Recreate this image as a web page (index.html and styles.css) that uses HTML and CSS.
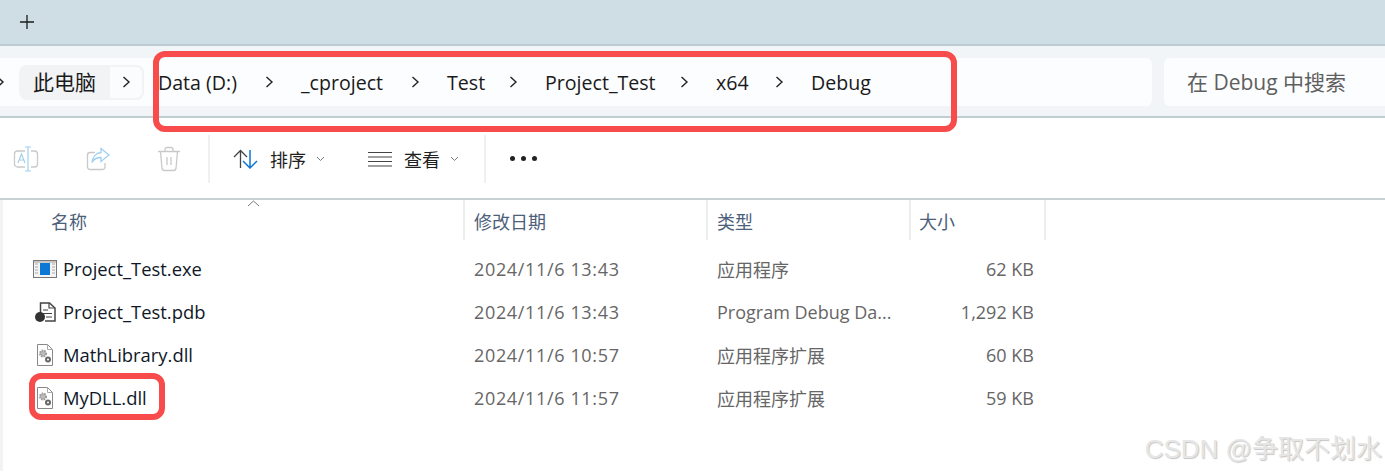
FILE: index.html
```html
<!DOCTYPE html>
<html lang="zh">
<head>
<meta charset="utf-8">
<title>Debug</title>
<link rel="stylesheet" href="styles.css">
</head>
<body>
<div class="window">
  <header class="tabbar">
    <svg class="plus" width="16" height="16" viewBox="0 0 16 16"><path d="M8 1v14M1 8h14" stroke="#1c1c1c" stroke-width="1.300" fill="none"/></svg>
  </header>
  <nav class="addressbar">
    <div class="crumbs">
      <svg class="chev chev-clip" width="9" height="14" viewBox="0 0 9 14"><path d="M1.500 2l5.500 5-5.500 5" /></svg>
      <div class="crumb-root"><span class="root-label">此电脑</span><span class="root-arrow"><svg class="chev" width="9" height="14" viewBox="0 0 9 14"><path d="M1.500 2l5.500 5-5.500 5" /></svg></span></div>
      <div class="path">
        <span class="seg seg-data">Data (D:)</span><svg class="chev" width="9" height="14" viewBox="0 0 9 14"><path d="M1.500 2l5.500 5-5.500 5" /></svg>
        <span class="seg seg-c">_cproject</span><svg class="chev" width="9" height="14" viewBox="0 0 9 14"><path d="M1.500 2l5.500 5-5.500 5" /></svg>
        <span class="seg seg-t">Test</span><svg class="chev" width="9" height="14" viewBox="0 0 9 14"><path d="M1.500 2l5.500 5-5.500 5" /></svg>
        <span class="seg seg-p">Project_Test</span><svg class="chev" width="9" height="14" viewBox="0 0 9 14"><path d="M1.500 2l5.500 5-5.500 5" /></svg>
        <span class="seg seg-x">x64</span><svg class="chev" width="9" height="14" viewBox="0 0 9 14"><path d="M1.500 2l5.500 5-5.500 5" /></svg>
        <span class="seg">Debug</span>
      </div>
    </div>
    <div class="search">在 Debug 中搜索</div>
  </nav>
  <section class="toolbar">
    <div class="tool-group disabled">
      <svg width="26" height="26" viewBox="0 0 26 26" fill="none"><rect x="1.500" y="5" width="23" height="16" rx="3" stroke="#c9c9c9" stroke-width="1.300"/><rect x="12" y="1" width="6" height="24" fill="#fff"/><path d="M12 1h6M15 1v24M12 25h6" stroke="#9fd0f0" stroke-width="1.200"/><path d="M5 17l3.500-9 3.500 9M6.300 14h4.400" stroke="#a9cfe8" stroke-width="1.200"/></svg>
      <svg width="26" height="26" viewBox="0 0 26 26" fill="none"><path d="M20 17v4a2.500 2.500 0 0 1-2.500 2.500H5A2.500 2.500 0 0 1 2.500 21V9A2.500 2.500 0 0 1 5 6.500h5" stroke="#c9c9c9" stroke-width="1.300"/><path d="M16 2.500l8 6.500-8 6.500V11.500c-4 0-7 1-9 5 .5-5.500 4-9.500 9-10z" stroke="#9fd0f0" stroke-width="1.300"/></svg>
      <svg width="24" height="26" viewBox="0 0 24 26" fill="none"><path d="M1 5.500h22M8 5.500V3.500a2 2 0 0 1 2-2h4a2 2 0 0 1 2 2v2M3.500 5.500l1.500 17a2.500 2.500 0 0 0 2.500 2h9a2.500 2.500 0 0 0 2.500-2l1.500-17M10 11v8M14 11v8" stroke="#c9c9c9" stroke-width="1.300"/></svg>
    </div>
    <div class="tool-sep"></div>
    <div class="tool-btn tool-sort">
      <svg width="25" height="20" viewBox="0 0 25 20" fill="none"><path d="M1 8l6.500-6.500L14 8M7.500 1.500V19" stroke="#444" stroke-width="1.300"/><path d="M10 12l7 7 7-7M17 1v18" stroke="#0a78d4" stroke-width="1.500"/></svg>
      <span class="tool-label">排序</span>
      <svg class="caret" width="9" height="6" viewBox="0 0 9 6"><path d="M1 1l3.500 3.500L8 1"/></svg>
    </div>
    <div class="tool-btn tool-view">
      <svg width="24" height="16" viewBox="0 0 24 16" fill="none"><path d="M0 1.500h24M0 6h24M0 10.500h24M0 15h24" stroke="#444" stroke-width="1.200"/></svg>
      <span class="tool-label">查看</span>
      <svg class="caret" width="9" height="6" viewBox="0 0 9 6"><path d="M1 1l3.500 3.500L8 1"/></svg>
    </div>
    <div class="tool-sep sep-2"></div>
    <div class="more"><i></i><i></i><i></i></div>
  </section>
  <main class="files">
    <div class="sort-mark"><svg width="13" height="7" viewBox="0 0 13 7"><path d="M1 6l5.500-5L12 6" fill="none" stroke="#7a7a7a"/></svg></div>
    <div class="row head">
      <div class="col-name">名称</div>
      <div class="col-date">修改日期</div>
      <div class="col-type">类型</div>
      <div class="col-size">大小</div>
    </div>
    <div class="row item">
      <div class="col-name">
        <svg class="ficon" width="24" height="18" viewBox="0 0 24 18" fill="none"><rect x=".5" y=".5" width="23" height="17" fill="#f4f4f4" stroke="#777"/><rect x="7" y="3" width="10" height="12" fill="#0a78d4"/><path d="M2 4h3M2 7h3M2 10h3M2 13h3M19 4h3M19 7h3M19 10h3M19 13h3" stroke="#aaa"/><path d="M1 2h22" stroke="#999"/></svg>
        <span>Project_Test.exe</span>
      </div>
      <div class="col-date">2024/11/6 13:43</div>
      <div class="col-type">应用程序</div>
      <div class="col-size">62 KB</div>
    </div>
    <div class="row item">
      <div class="col-name">
        <svg class="ficon" width="24" height="20" viewBox="0 0 24 20" fill="none"><path d="M7.500 12V1h9l5.500 5v13H12" fill="#fff" stroke="#444" stroke-width="1.500"/><path d="M16 1v5h6M10 8h5M10 11.500h9M13 15h6" stroke="#444" stroke-width="1.200"/><circle cx="7" cy="15" r="5" fill="#333"/></svg>
        <span>Project_Test.pdb</span>
      </div>
      <div class="col-date">2024/11/6 13:43</div>
      <div class="col-type">Program Debug Da...</div>
      <div class="col-size">1,292 KB</div>
    </div>
    <div class="row item">
      <div class="col-name">
        <svg class="ficon" width="24" height="22" viewBox="0 0 24 22" fill="none"><path d="M4.500.5h10l5 5v16h-15z" fill="#fff" stroke="#888"/><path d="M14.500.5v5h5" stroke="#aaa"/><circle cx="10" cy="9.500" r="3" fill="#bbb" stroke="#999" stroke-width="2" stroke-dasharray="1.500 1"/><circle cx="15" cy="15.500" r="2" fill="#fff" stroke="#666" stroke-width="2"/></svg>
        <span>MathLibrary.dll</span>
      </div>
      <div class="col-date">2024/11/6 10:57</div>
      <div class="col-type">应用程序扩展</div>
      <div class="col-size">60 KB</div>
    </div>
    <div class="row item">
      <div class="col-name">
        <svg class="ficon" width="24" height="22" viewBox="0 0 24 22" fill="none"><path d="M4.500.5h10l5 5v16h-15z" fill="#fff" stroke="#888"/><path d="M14.500.5v5h5" stroke="#aaa"/><circle cx="10" cy="9.500" r="3" fill="#bbb" stroke="#999" stroke-width="2" stroke-dasharray="1.500 1"/><circle cx="15" cy="15.500" r="2" fill="#fff" stroke="#666" stroke-width="2"/></svg>
        <span>MyDLL.dll</span>
      </div>
      <div class="col-date">2024/11/6 11:57</div>
      <div class="col-type">应用程序扩展</div>
      <div class="col-size">59 KB</div>
    </div>
  </main>
  <div class="mark mark-path"></div>
  <div class="mark mark-file"></div>
  <div class="watermark">CSDN @争取不划水</div>
</div>
</body>
</html>
```
FILE: styles.css
```css
* { box-sizing: border-box; }
html, body { margin: 0; padding: 0; background: #fff; overflow: hidden; }
body { font-family: "Open Sans", "Noto Sans CJK SC", sans-serif; color: #1a1a1a; }
.window { position: relative; width: 1385px; height: 473px; overflow: hidden; }

.tabbar { height: 46px; background: #cfdde4; border-bottom: 2px solid #bccbd1; padding: 14px 0 0 19px; }
.plus { display: block; }

.addressbar { height: 72px; background: #f1f5f7; border-bottom: 2px solid #c0cdd1; display: flex; gap: 12px; padding: 12px 0 0 0; }
.crumbs { width: 1152px; height: 48px; background: #fcfdfe; border-radius: 0 6px 6px 0; display: flex; align-items: center; padding-left: 19px; }
.chev-clip { margin-left: -23px; margin-right: 14px; }
.crumb-root { width: 125px; height: 35px; border-radius: 8px; background: #f2f3f5; display: flex; flex: none; }
.root-label { width: 91px; padding-left: 14px; font-size: 21px; line-height: 35px; white-space: nowrap; }
.root-arrow { width: 34px; background: #fbfcfd; border: 2px solid #f2f3f5; border-left: 0; border-radius: 0 8px 8px 0; display: flex; align-items: center; justify-content: center; }
.path { display: flex; align-items: center; margin-left: 14px; font-size: 19.600px; }
.seg { white-space: nowrap; flex: none; margin-right: 26px; }
.seg + .chev { margin-right: 27px; }
.seg-data { width: 81px; }
.seg-c { width: 84px; }
.seg-t { width: 36px; }
.seg-p { width: 109px; }
.seg-x { width: 33px; }
.chev { fill: none; stroke: #222; stroke-width: 1.400; flex: none; }
.search { flex: 1; height: 48px; background: #fcfdfe; border-radius: 6px 0 0 6px; padding-left: 23px; font-size: 21px; line-height: 48px; color: #5f5f5f; white-space: nowrap; }

.toolbar { height: 82px; border-bottom: 2px solid #c7d0d3; display: flex; align-items: center; padding: 1px 0 0 13px; }
.tool-group { width: 183px; display: flex; align-items: center; gap: 46px; }
.tool-sep { width: 2px; height: 48px; background: #eef0f1; margin-left: 12px; }
.tool-btn { display: flex; align-items: center; }
.tool-sort { margin-left: 23px; width: 135px; }
.tool-view { width: 118px; }
.tool-label { font-size: 18px; margin-left: 12px; margin-right: 10px; color: #1f1f1f; }
.caret { fill: none; stroke: #777; stroke-width: 1; }
.sep-2 { margin-left: -2px; }
.more { margin-left: 24px; display: flex; gap: 6px; }
.more i { width: 5px; height: 5px; border-radius: 50%; background: #222; display: block; }

.files { position: relative; height: 271px; border-left: 3px solid #f1f3f4; }
.sort-mark { position: absolute; left: 244px; top: 0; line-height: 0; }
.row { display: grid; grid-template-columns: 462px 243px 203px 135px; align-items: center; }
.head { height: 40px; font-size: 18px; color: #4c607a; }
.head > div { height: 40px; line-height: 44px; border-right: 2px solid #ecedef; }
.head .col-name { padding-left: 48px; }
.head .col-date { padding-left: 9px; }
.head .col-type { padding-left: 9px; }
.head .col-size { padding-left: 8px; }
.item { height: 43px; font-size: 18px; }
.item:nth-child(3) { margin-top: 7px; }
.item .col-name { display: flex; align-items: center; padding-left: 30px; font-size: 18.400px; color: #101828; }
.ficon { width: 24px; flex: none; margin-right: 6px; }
.item .col-date { padding-left: 9px; color: #666; letter-spacing: .65px; }
.item .col-type { padding-left: 9px; color: #666; }
.item .col-size { text-align: right; padding-right: 12px; color: #666; }

.mark { position: absolute; border: 6px solid #f74c4b; pointer-events: none; }
.mark-path { left: 153px; top: 51px; width: 804px; height: 81px; border-radius: 12px; }
.mark-file { left: 29px; top: 373px; width: 136px; height: 47px; border-radius: 12px; }
.watermark { position: absolute; right: 3px; top: 434px; font-family: "Liberation Sans", "Noto Sans CJK SC", sans-serif; font-size: 26px; line-height: 30px; color: #e6e6e6; text-shadow: 1px 1px 1px #c6c6c6; white-space: nowrap; }
```
